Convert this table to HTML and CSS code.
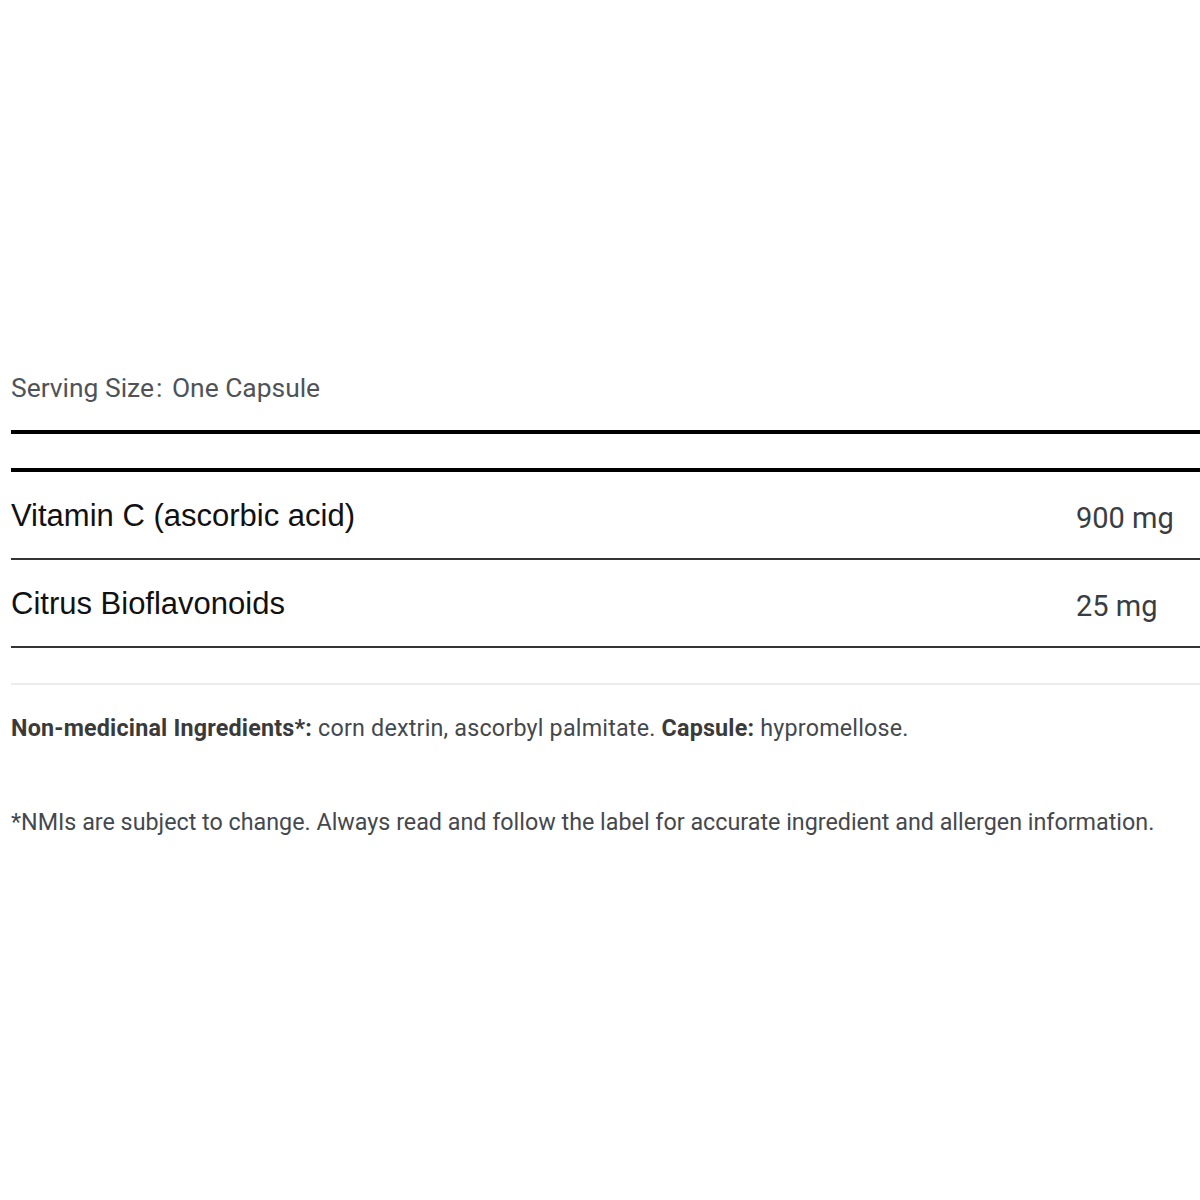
FILE: index.html
```html
<!DOCTYPE html>
<html>
<head>
<meta charset="utf-8">
<link rel="stylesheet" href="styles.css">
</head>
<body>
<div class="panel">
  <div class="serving">Serving Size<span class="colon">:</span> One Capsule</div>
  <div class="rule-thick rule-first"></div>
  <div class="rule-thick rule-second"></div>
  <div class="row">
    <div class="name">Vitamin C (ascorbic acid)</div>
    <div class="amount">900 mg</div>
  </div>
  <div class="row">
    <div class="name">Citrus Bioflavonoids</div>
    <div class="amount">25 mg</div>
  </div>
  <div class="rule-light"></div>
  <p class="nmi"><b>Non-medicinal Ingredients*:</b> corn dextrin, ascorbyl palmitate. <b>Capsule:</b> hypromellose.</p>
  <p class="note">*NMIs are subject to change. Always read and follow the label for accurate ingredient and allergen information.</p>
</div>
</body>
</html>
```

FILE: styles.css
```css
html, body {
  margin: 0;
  padding: 0;
  background: #ffffff;
}
body {
  width: 1200px;
  height: 1200px;
  overflow: hidden;
}
.panel {
  margin-left: 11px;
  padding-top: 372px;
  width: 1200px;
}
.serving {
  font-family: Roboto, "Liberation Sans", sans-serif;
  font-size: 26.4px;
  color: #4f5358;
  line-height: 32px;
  height: 32px;
}
.serving .colon {
  margin: 0 3px 0 2px;
}
.rule-thick {
  height: 4px;
  background: #000;
}
.rule-first {
  margin-top: 26px;
}
.rule-second {
  margin-top: 34px;
}
.row {
  display: flex;
  align-items: center;
  height: 86px;
  border-bottom: 2px solid #333;
}
.name {
  font-family: "Liberation Sans", Arial, sans-serif;
  font-size: 31px;
  color: #111;
  flex: 0 0 1065px;
  padding-top: 1px;
}
.amount {
  font-family: Roboto, "Liberation Sans", sans-serif;
  font-size: 29px;
  color: #3a3d42;
  padding-top: 6px;
}
.rule-light {
  margin-top: 35px;
  height: 2px;
  background: #ececec;
}
.nmi, .note {
  font-family: Roboto, "Liberation Sans", sans-serif;
  font-size: 23.3px;
  color: #45484d;
  margin: 0;
  line-height: 30px;
}
.nmi {
  margin-top: 28px;
  letter-spacing: 0.2px;
}
.nmi b {
  font-weight: 700;
  color: #3a3a3a;
}
.note {
  margin-top: 64px;
}
```
